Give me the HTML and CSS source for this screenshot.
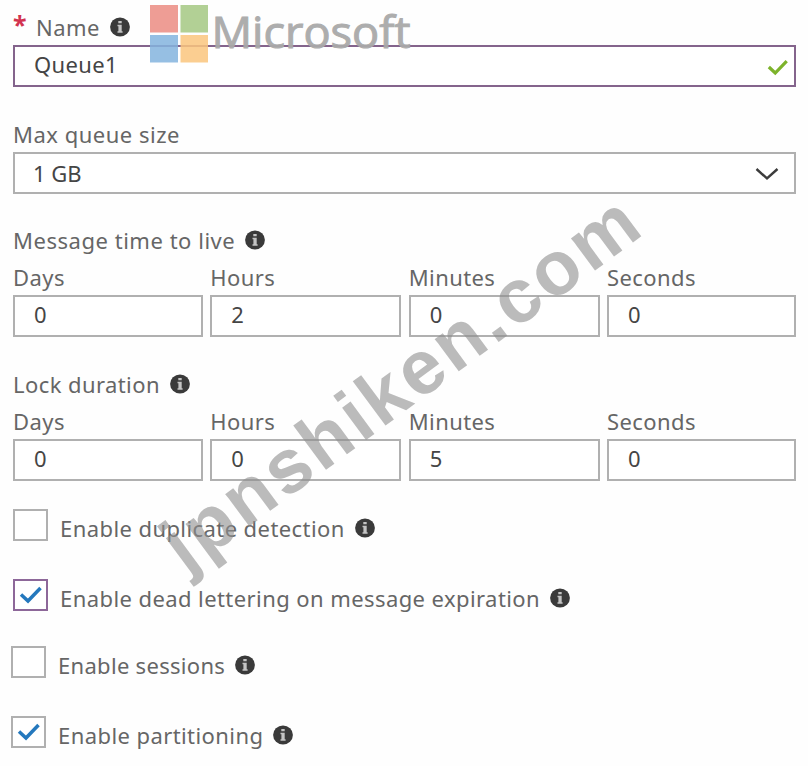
FILE: index.html
```html
<!DOCTYPE html>
<html lang="en">
<head>
<meta charset="utf-8">
<title>Create queue</title>
<link rel="stylesheet" href="styles.css">
</head>
<body>
<svg class="defs" width="0" height="0">
  <symbol id="info" viewBox="0 0 20 20">
    <ellipse cx="10" cy="10" rx="9.9" ry="9.4" fill="#3a3a3a"/>
    <path d="M8.300 4h3.400v2.300H8.300zM7.500 7.700h4.200v6.500h.9v1.500H7.500v-1.500h.9V9.200h-.9z" fill="#c4c4c4"/>
  </symbol>
  <symbol id="check" viewBox="0 0 24 18">
    <path d="M2 8.500 9 15 21.500 2" fill="none" stroke="currentColor" stroke-width="3.500"/>
  </symbol>
</svg>
<form class="form">
  <div class="label name"><span class="star">*</span><span>Name</span><svg class="info"><use href="#info"/></svg></div>
  <div class="box focus"><span class="value">Queue1</span><svg class="valid"><use href="#check"/></svg></div>

  <div class="label size"><span>Max queue size</span></div>
  <div class="box select"><span>1 GB</span><svg class="chevron" viewBox="0 0 24 14"><path d="M1.500 2 12 11.500 22.500 2" fill="none" stroke="#3c3c3c" stroke-width="2.400"/></svg></div>

  <div class="label ttl"><span>Message time to live</span><svg class="info"><use href="#info"/></svg></div>
  <div class="grid">
    <div><div class="label"><span>Days</span></div><div class="box">0</div></div>
    <div><div class="label"><span>Hours</span></div><div class="box">2</div></div>
    <div><div class="label"><span>Minutes</span></div><div class="box">0</div></div>
    <div><div class="label"><span>Seconds</span></div><div class="box">0</div></div>
  </div>

  <div class="label lock"><span>Lock duration</span><svg class="info"><use href="#info"/></svg></div>
  <div class="grid">
    <div><div class="label"><span>Days</span></div><div class="box">0</div></div>
    <div><div class="label"><span>Hours</span></div><div class="box">0</div></div>
    <div><div class="label"><span>Minutes</span></div><div class="box">5</div></div>
    <div><div class="label"><span>Seconds</span></div><div class="box">0</div></div>
  </div>

  <div class="option dup"><span class="cb"></span><span class="label"><span>Enable duplicate detection</span><svg class="info"><use href="#info"/></svg></span></div>
  <div class="option dead"><span class="cb active"><svg class="tick"><use href="#check"/></svg></span><span class="label"><span>Enable dead lettering on message expiration</span><svg class="info"><use href="#info"/></svg></span></div>
  <div class="option ses"><span class="cb"></span><span class="label"><span>Enable sessions</span><svg class="info"><use href="#info"/></svg></span></div>
  <div class="option part"><span class="cb"><svg class="tick"><use href="#check"/></svg></span><span class="label"><span>Enable partitioning</span><svg class="info"><use href="#info"/></svg></span></div>
</form>
<svg class="overlay" width="808" height="766">
  <g opacity=".85">
    <path d="M150 5h28v27.500h-28z" fill="#ec8d83"/>
    <path d="M180.500 5H208v27.500h-27.500z" fill="#a5c983"/>
    <path d="M150 35h28v27.500h-28z" fill="#84b5df"/>
    <path d="M180.500 35H208v27.500h-27.500z" fill="#fbc67e"/>
  </g>
  <text class="brand" x="211.500" y="48" textLength="199" lengthAdjust="spacingAndGlyphs">Microsoft</text>
  <text class="mark" transform="translate(185.500 573.700) rotate(-36.500)">jpnshiken.com</text>
</svg>
</body>
</html>
```
FILE: styles.css
```css
* { box-sizing: border-box; }
body {
  margin: 0;
  height: 766px;
  overflow: hidden;
  background: #fefefe;
  font: 22px/30px "Noto Sans", "Open Sans", sans-serif;
  color: #454545;
}
.defs { position: absolute; }
.form { padding: 12px 12px 0 13px; }
.label {
  display: flex;
  align-items: center;
  height: 30px;
  color: #666;
  letter-spacing: .42px;
  white-space: nowrap;
}
.label > span { flex: none; }
.info { width: 20px; height: 20px; margin-left: 10px; margin-top: -1px; flex: none; }
.name { margin-bottom: 3px; }
.star { width: 23px; height: 30px; color: #d2334f; font-size: 25px; line-height: 24px; font-weight: 700; }
.box {
  display: flex;
  align-items: center;
  justify-content: space-between;
  height: 42px;
  padding: 0 7px 4px 19px;
  border: 2px solid #b0b0b0;
  background: #fff;
}
.focus { border-color: #84648c; padding-right: 5px; }
.value { letter-spacing: .35px; }
.valid { width: 22px; height: 17px; color: #7db32b; margin-top: 6px; }
.chevron { width: 24px; height: 14px; margin-right: 8px; margin-top: 2px; }
.select { padding: 0 7px 1px 18px; }
.size { margin: 32px 0 3px; letter-spacing: .5px; }
.ttl { margin: 31px 0 7px; letter-spacing: .53px; }
.grid {
  display: grid;
  grid-template-columns: 190px 191px 191px 189px;
  column-gap: 7.330px;
}
.grid .label { margin-bottom: 3px; }
.lock { margin: 32px 0 7px; }
.option { display: flex; height: 42px; }
.dup { margin-top: 28px; }
.dead { margin-top: 28px; }
.ses { margin: 25px 0 0 -2px; }
.part { margin: 28px 0 0 -2px; }
.option .label { margin: 4px 0 0 12px; }
.ses .label { letter-spacing: .3px; }
.cb {
  width: 35px;
  height: 32px;
  flex: none;
  border: 2px solid #b0b0b0;
  background: #fff;
}
.active { border-color: #8d6799; }
.tick { display: block; width: 24px; height: 18px; margin: 5px 0 0 4px; color: #2478bd; }
.overlay { position: absolute; left: 0; top: 0; pointer-events: none; }
.brand { font: 400 43px "Open Sans", sans-serif; fill: #a9a9a9; stroke: #a9a9a9; stroke-width: 1; opacity: .95; }
.mark { font: bold 76px "Liberation Sans", sans-serif; letter-spacing: 3.3px; fill: #8e8e8e; fill-opacity: .6; }
```
